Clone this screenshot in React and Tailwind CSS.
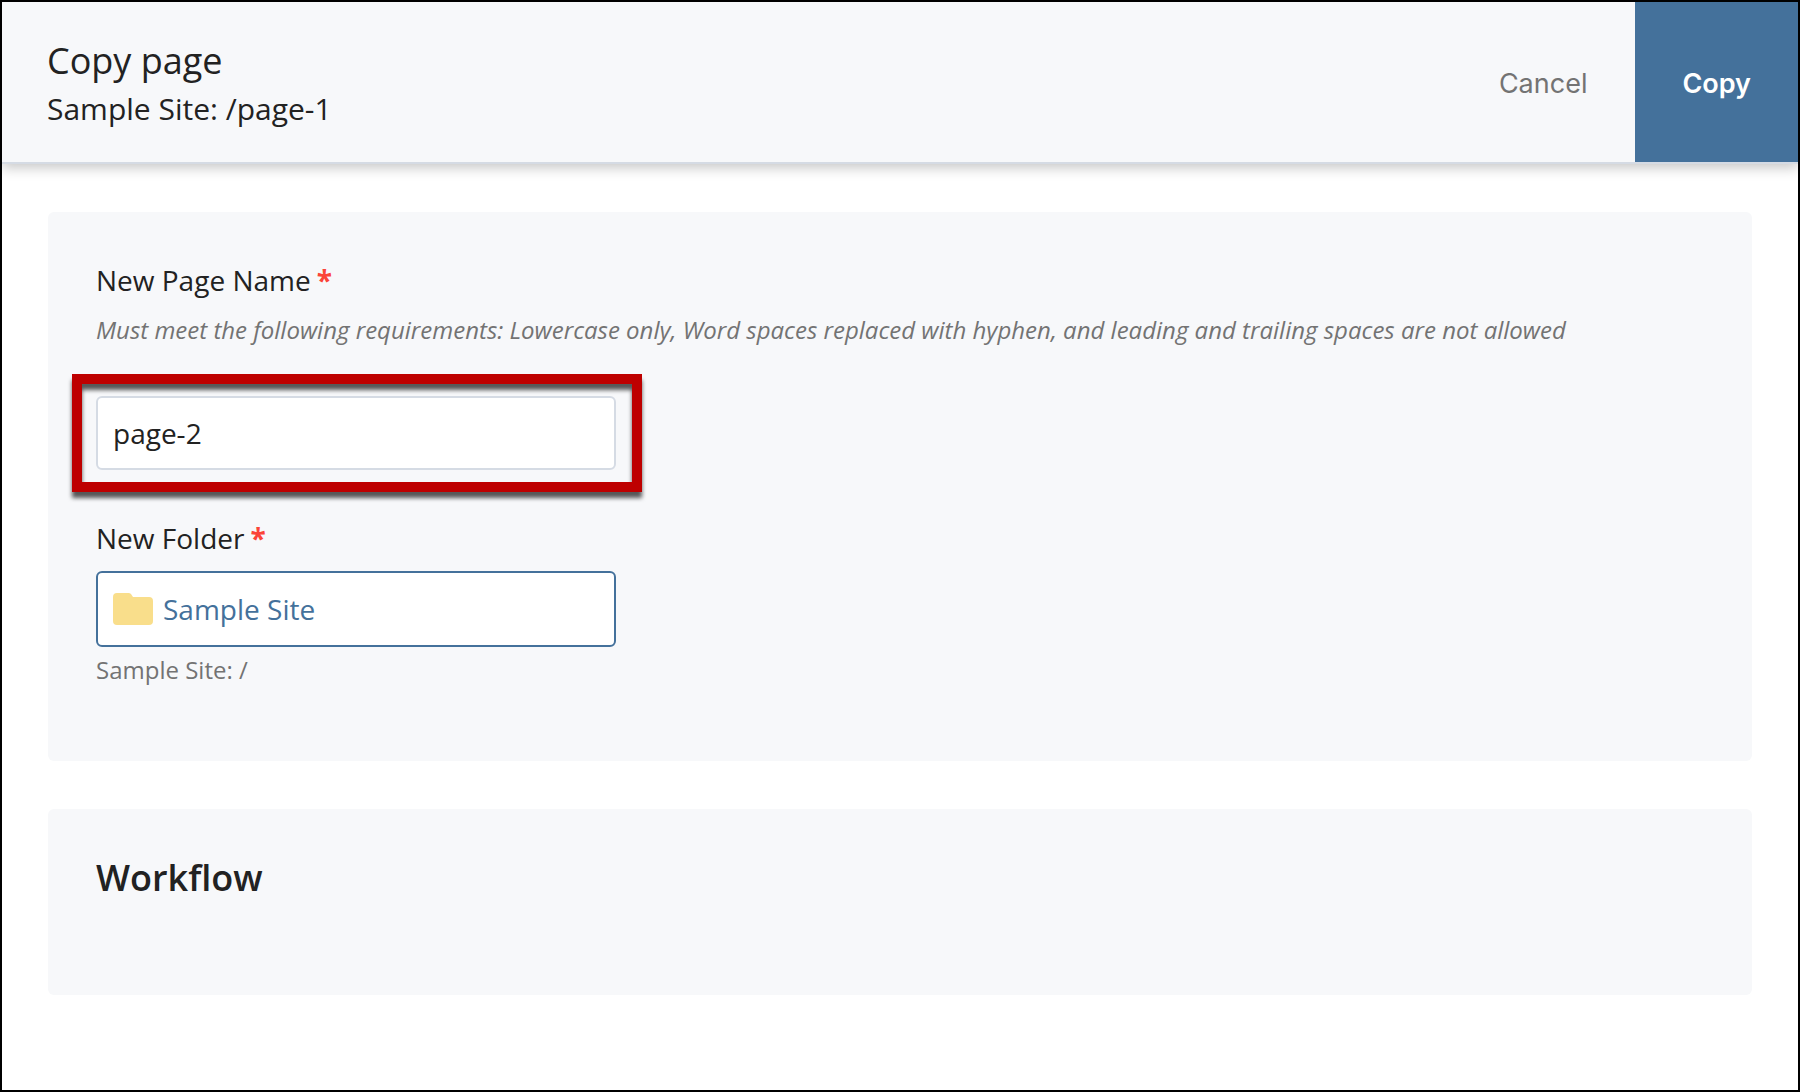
import React, { useState } from "react";

function RequiredMark() {
  return (
    <span className="font-bold text-[#fb4437]" aria-hidden="true">
      *
    </span>
  );
}

function FolderIcon() {
  return (
    <svg className="h-8 w-10 shrink-0" viewBox="0 0 40 32" aria-hidden="true">
      <path
        d="M4 0H15.5Q17 0 18 1L20 4H36A4 4 0 0 1 40 8V28A4 4 0 0 1 36 32H4A4 4 0 0 1 0 28V4A4 4 0 0 1 4 0Z"
        fill="#f9de8b"
      />
    </svg>
  );
}

function Header() {
  return (
    <header className="relative flex justify-between border-b-2 border-[#d5dbe4] bg-[#f7f8fa] shadow-[0_4px_12px_rgba(0,0,0,0.22)]">
      <div className="pt-[35px] pb-[29px] pl-[45px]">
        <h1 className="text-4xl leading-12">Copy page</h1>
        <p className="text-[30px] leading-12">Sample Site: /page-1</p>
      </div>
      <div className="flex font-[Inter,sans-serif] text-[27px]">
        <button type="button" className="px-12 pt-1 text-[#737373]">
          Cancel
        </button>
        <button type="button" className="bg-[#44719b] px-[47px] pt-1 font-semibold text-white">
          Copy
        </button>
      </div>
    </header>
  );
}

export default function App() {
  const [name, setName] = useState("page-2");

  return (
    <div className="flex min-h-screen flex-col border-2 border-black bg-white font-['Open_Sans',sans-serif] text-[#222222]">
      <Header />
      <main className="flex flex-col gap-12 px-[46px] py-12">
        <section className="rounded-md bg-[#f7f8fa] px-12 pt-12 pb-[75px] text-[28px] leading-10">
          <label htmlFor="page-name" className="flex gap-1.5">
            New Page Name <RequiredMark />
          </label>
          <p id="page-name-help" className="mt-3.5 text-2xl leading-8 text-[#737373] italic">
            Must meet the following requirements: Lowercase only, Word spaces replaced with hyphen, and
            leading and trailing spaces are not allowed
          </p>
          <div className="relative mt-[50px] w-full max-w-[520px]">
            <input
              id="page-name"
              type="text"
              required
              aria-describedby="page-name-help"
              value={name}
              onChange={(e) => setName(e.target.value)}
              className="block h-[74px] w-full rounded-md border-2 border-[#d5dbe4] bg-white px-[15px] outline-none"
            />
            <div className="pointer-events-none absolute -top-[22px] -right-[26px] -bottom-[22px] -left-6 border-10 border-[#be0000] drop-shadow-[0_6px_2px_rgba(0,0,0,0.65)]" />
          </div>
          <label htmlFor="folder" className="mt-12 flex gap-1.5">
            New Folder <RequiredMark />
          </label>
          <button
            id="folder"
            type="button"
            className="mt-[13px] flex h-[76px] w-full max-w-[520px] items-center gap-2.5 rounded-md border-2 border-[#44719b] bg-white px-[15px] font-medium text-[#44719b]"
          >
            <FolderIcon />
            Sample Site
          </button>
          <p className="mt-[7px] text-2xl leading-8 text-[#737373]">Sample Site: /</p>
        </section>
        <section className="rounded-md bg-[#f7f8fa] px-12 pt-[45px] pb-[93px]">
          <h2 className="text-4xl leading-12 font-semibold">Workflow</h2>
        </section>
      </main>
    </div>
  );
}
